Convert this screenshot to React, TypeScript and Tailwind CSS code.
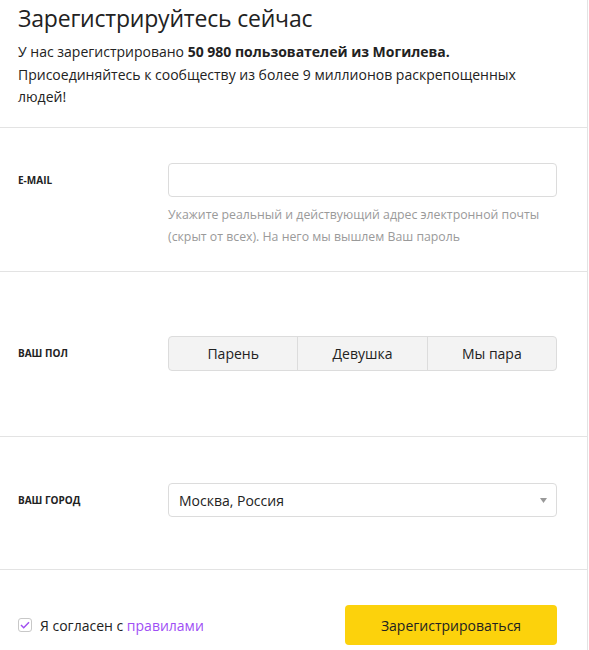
import React from "react";

export default function App() {
  const font = { fontFamily: '"Open Sans", "Liberation Sans", sans-serif' };
  return (
    <div className="w-[589px] h-[650px] bg-white text-[#222]" style={font}>
      <div className="w-[588px] h-[650px] border-r border-[#e3e3e3]">
        {/* header */}
        <div className="h-[128px] border-b border-[#e3e3e3] px-[18px] pt-[2px]">
          <h1 className="text-[23px] leading-[32px] font-medium tracking-[-0.2px]">Зарегистрируйтесь сейчас</h1>
          <p className="mt-[7px] max-w-[500px] text-[14px] leading-[22.5px]">
            У нас зарегистрировано <b className="font-bold">50 980 пользователей из Могилева.</b>
            <br />
            Присоединяйтесь к сообществу из более 9 миллионов раскрепощенных людей!
          </p>
        </div>
        {/* email */}
        <div className="h-[144px] border-b border-[#e3e3e3] flex pl-[18px] pt-[35px]">
          <div className="w-[150px] h-[34px] flex items-center text-[10px] font-bold uppercase">E-mail</div>
          <div className="w-[389px]">
            <div className="h-[34px] border border-[#dcdcdc] rounded-[4px] bg-white"></div>
            <p className="mt-[7px] text-[12.3px] leading-[22px] text-[#9a9a9a]">
              Укажите реальный и действующий адрес электронной почты (скрыт от всех). На него мы вышлем Ваш пароль
            </p>
          </div>
        </div>
        {/* gender */}
        <div className="h-[165px] border-b border-[#e3e3e3] flex items-center pl-[18px] pb-[2px]">
          <div className="w-[150px] text-[10px] font-bold uppercase">Ваш пол</div>
          <div className="w-[389px] h-[35px] flex border border-[#dcdcdc] rounded-[4px] bg-[#f3f3f3] text-[14px] overflow-hidden">
            <div className="flex-1 flex items-center justify-center">Парень</div>
            <div className="flex-1 flex items-center justify-center border-l border-[#dcdcdc]">Девушка</div>
            <div className="flex-1 flex items-center justify-center border-l border-[#dcdcdc]">Мы пара</div>
          </div>
        </div>
        {/* city */}
        <div className="h-[133px] border-b border-[#e3e3e3] flex items-center pl-[18px] pb-[6px]">
          <div className="w-[150px] text-[10px] font-bold uppercase">Ваш город</div>
          <div className="w-[389px] h-[34px] flex items-center justify-between border border-[#dcdcdc] rounded-[4px] bg-white pl-[10px] pr-[9px]">
            <span className="text-[14px]">Москва, Россия</span>
            <svg width="7" height="5" viewBox="0 0 7 5"><path d="M0 0h7L3.5 5z" fill="#999" /></svg>
          </div>
        </div>
        {/* footer */}
        <div className="h-[80px] flex items-center justify-between pl-[18px] pr-[30px] pt-[30px]">
          <label className="flex items-center gap-[8px] text-[14px]">
            <span className="w-[14px] h-[14px] border border-[#c8c8c8] rounded-[3px] flex items-center justify-center bg-white">
              <svg width="10" height="8" viewBox="0 0 10 8"><path d="M1 4l2.7 2.7L9 1.3" stroke="#a050f0" strokeWidth="1.5" fill="none" /></svg>
            </span>
            <span>Я согласен с <span className="text-[#a04ff5]">правилами</span></span>
          </label>
          <button className="w-[212px] h-[40px] rounded-[4px] bg-[#fcd20c] text-[14px] text-[#222]">Зарегистрироваться</button>
        </div>
      </div>
    </div>
  );
}
